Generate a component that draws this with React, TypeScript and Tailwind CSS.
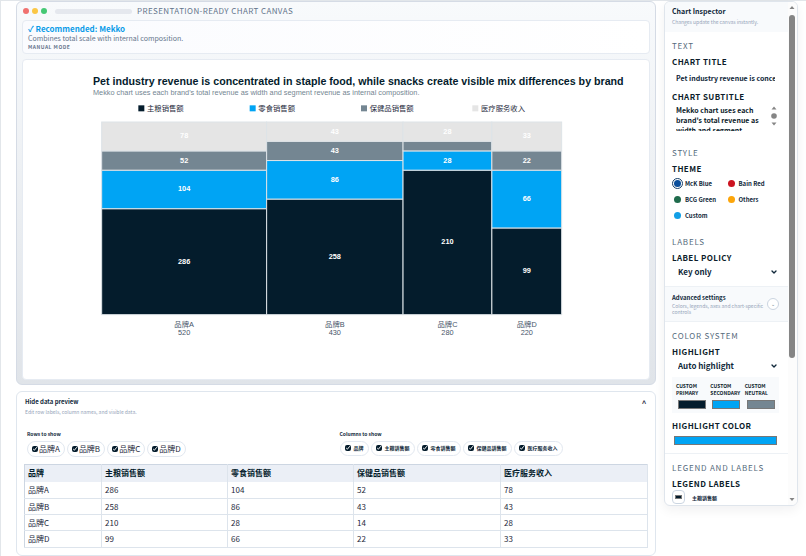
import type { ReactNode } from "react";
import { ChevronDown } from "lucide-react";

const series = [
  { name: "主粮销售额", color: "#041c2c" },
  { name: "零食销售额", color: "#00a4f4" },
  { name: "保健品销售额", color: "#748692" },
  { name: "医疗服务收入", color: "#e5e5e5" },
];

const brands = [
  { name: "品牌A", values: [286, 104, 52, 78] },
  { name: "品牌B", values: [258, 86, 43, 43] },
  { name: "品牌C", values: [210, 28, 14, 28] },
  { name: "品牌D", values: [99, 66, 22, 33] },
];

const themes = [
  { name: "McK Blue", color: "#0b4f9c" },
  { name: "Bain Red", color: "#cc1420" },
  { name: "BCG Green", color: "#1f6b4c" },
  { name: "Others", color: "#fca50a" },
  { name: "Custom", color: "#129fe6" },
];

const columns = ["品牌", ...series.map((s) => s.name)];
const columnWidths = ["w-[77px]", "w-[126px]", "w-[126px]", "w-[147px]", "w-auto"];

function MekkoChart() {
  const left = 118;
  const top = 93;
  const width = 690;
  const height = 289;
  const sum = (values: number[]) => values.reduce((a, b) => a + b, 0);
  const grand = brands.reduce((a, b) => a + sum(b.values), 0);
  let nextX = left;
  return (
    <svg viewBox="0 0 939 478" className="block w-full font-['Liberation_Sans','Noto_Sans_CJK_SC',sans-serif]">
      <text x="105" y="38" fontSize="16" fontWeight="700" fill="#041c2c">
        Pet industry revenue is concentrated in staple food, while snacks create visible mix differences by brand
      </text>
      <text x="105" y="52" fontSize="11" fill="#748692">
        Mekko chart uses each brand's total revenue as width and segment revenue as internal composition.
      </text>
      {series.map((s, i) => (
        <g key={s.name} fontSize="11" fill="#1e293b">
          <rect x={173 + i * 167} y="68" width="9" height="9" fill={s.color} />
          <text x={186 + i * 167} y="77">{s.name}</text>
        </g>
      ))}
      {brands.map((brand) => {
        const total = sum(brand.values);
        const w = (total / grand) * width;
        const x = nextX;
        nextX += w;
        let y = top + height;
        return (
          <g key={brand.name} textAnchor="middle" fontSize="11">
            {brand.values.map((value, i) => {
              const h = (value / total) * height;
              y -= h;
              return (
                <g key={i}>
                  <rect x={x} y={y} width={w} height={h} fill={series[i].color} stroke="#dde3e7" strokeWidth="1.5" />
                  {value > 20 && (
                    <text x={x + w / 2} y={y + h / 2 + 3} fill="#fff" fontWeight="700">
                      {value}
                    </text>
                  )}
                </g>
              );
            })}
            <text x={x + w / 2} y="400" fill="#475569">{brand.name}</text>
            <text x={x + w / 2} y="413" fill="#475569">{total}</text>
          </g>
        );
      })}
    </svg>
  );
}

function SectionTitle({ children }: { children: ReactNode }) {
  return <h3 className="text-[8px] leading-[12px] tracking-widest text-[#566b7d]">{children}</h3>;
}

const labelClass = "block text-[8px] leading-[12px] font-bold tracking-wider text-[#0c1c2a]";

function SelectField({ id, label, value }: { id: string; label: string; value: string }) {
  return (
    <div className="mt-1">
      <label htmlFor={id} className={labelClass}>{label}</label>
      <div className="grid items-center">
        <select id={id} className="col-start-1 row-start-1 h-4 w-full appearance-none bg-transparent px-1.5 text-[8px] font-bold text-[#10283a]">
          <option>{value}</option>
        </select>
        <ChevronDown className="pointer-events-none col-start-1 row-start-1 mr-px size-2 justify-self-end text-[#10283a]" strokeWidth={4} />
      </div>
    </div>
  );
}

function CheckPill({ label, small = false }: { label: string; small?: boolean }) {
  return (
    <label
      className={
        small
          ? "flex h-[15px] items-center gap-[3px] rounded-full border border-[#e2e8f0] px-1 text-[5px] leading-[8px] font-bold whitespace-nowrap text-[#10283a]"
          : "flex h-4 items-center gap-px rounded-full border border-[#e2e8f0] px-1 text-[8px] leading-[12px] whitespace-nowrap"
      }
    >
      <input type="checkbox" defaultChecked className="size-[6px] accent-[#041c2c]" />
      {label}
    </label>
  );
}

function Inspector() {
  return (
    <aside className="flex h-[505px] w-[134px] shrink-0 overflow-hidden rounded-md border border-[#dfe5ec] bg-white shadow-[0_4px_12px_rgba(15,23,42,0.06)]">
      <div className="min-w-0 flex-1 overflow-hidden">
        <header className="h-[30px] bg-[#f8fafc] px-[7px] pt-1">
          <h2 className="text-[7px] leading-[11px] font-bold text-[#10283a]">Chart Inspector</h2>
          <p className="text-[5px] leading-[9px] text-[#94a3b8]">Changes update the canvas instantly.</p>
        </header>

        <section className="pt-2 pr-[9px] pl-[7px]">
          <SectionTitle>TEXT</SectionTitle>
          <label htmlFor="title" className={`mt-1 ${labelClass}`}>CHART TITLE</label>
          <div className="pr-1 pl-1">
            <input
              id="title"
              className="block h-[19px] w-full text-[7px] font-bold text-[#10283a]"
              defaultValue="Pet industry revenue is concentrated in staple food, while snacks create visible mix differences by brand"
            />
          </div>
          <label htmlFor="subtitle" className={`mt-1 ${labelClass}`}>CHART SUBTITLE</label>
          <div className="flex items-start pt-0.5 pr-0.5 pl-1">
            <textarea
              id="subtitle"
              className="h-[26px] min-w-0 flex-1 resize-none overflow-hidden text-[7px] leading-[10px] font-bold text-[#0c1c2a]"
              defaultValue="Mekko chart uses each brand's total revenue as width and segment revenue as internal composition."
            />
            <svg viewBox="0 0 6 24" className="h-6 w-1.5" fill="#858585">
              <path d="M0.5 4.5 3 1.5 5.5 4.5Z" />
              <circle cx="3" cy="11" r="2.8" />
              <path d="M0.5 17.5 3 20.5 5.5 17.5Z" />
            </svg>
          </div>
        </section>

        <section className="pt-4 pr-[9px] pl-[7px]">
          <SectionTitle>STYLE</SectionTitle>
          <fieldset className="mt-1">
            <legend className={labelClass}>THEME</legend>
            <div className="grid grid-cols-2">
              {themes.map((theme, i) => (
                <label key={theme.name} className="flex h-4 items-center gap-0.5 text-[6px] font-bold whitespace-nowrap text-[#10283a]">
                  <span className={i === 0 ? "grid size-[11px] place-items-center rounded-full border border-[#173f68]" : "grid size-[11px] place-items-center"}>
                    <input
                      type="radio"
                      name="theme"
                      defaultChecked={i === 0}
                      className="size-[7px] appearance-none rounded-full"
                      style={{ backgroundColor: theme.color }}
                    />
                  </span>
                  {theme.name}
                </label>
              ))}
            </div>
          </fieldset>
        </section>

        <section className="pt-[13px] pr-[9px] pb-1.5 pl-[7px]">
          <SectionTitle>LABELS</SectionTitle>
          <SelectField id="policy" label="LABEL POLICY" value="Key only" />
        </section>

        <section className="flex h-9 items-center justify-between border-y border-[#edf1f5] bg-[#f8fafc] pr-[9px] pl-[7px]">
          <div>
            <h3 className="text-[6px] leading-[10px] font-bold text-[#10283a]">Advanced settings</h3>
            <p className="text-[5px] leading-[6px] text-[#94a3b8]">Colors, legends, axes and chart-specific controls</p>
          </div>
          <button aria-label="Toggle advanced settings" className="grid size-3 shrink-0 place-items-center rounded-full border border-[#cbd5e1] bg-white text-[5px] text-[#64748b]">
            ⌄
          </button>
        </section>

        <section className="border-b border-[#edf1f5] pt-2 pr-[9px] pb-1 pl-[7px]">
          <SectionTitle>COLOR SYSTEM</SectionTitle>
          <SelectField id="highlight" label="HIGHLIGHT" value="Auto highlight" />
          <div className="mt-[3px] grid h-9 grid-cols-3 bg-[#f8fafc] pt-[5px] pl-1">
            {["PRIMARY", "SECONDARY", "NEUTRAL"].map((name, i) => (
              <label key={name} className="text-[5px] leading-[7px] font-bold text-[#0c1c2a]">
                <span className="block">CUSTOM</span>
                <span className="block">{name}</span>
                <input type="color" defaultValue={series[i].color} className="block h-[17px] w-8" />
              </label>
            ))}
          </div>
          <label htmlFor="accent" className={`mt-[7px] ${labelClass}`}>HIGHLIGHT COLOR</label>
          <input id="accent" type="color" defaultValue="#00a4f4" className="block h-[17px] w-full" />
        </section>

        <section className="pt-2 pr-[9px] pl-[7px]">
          <SectionTitle>LEGEND AND LABELS</SectionTitle>
          <h4 className={`mt-1 ${labelClass}`}>LEGEND LABELS</h4>
          <div className="flex items-center gap-[7px]">
            <input aria-label="主粮销售额 color" type="color" defaultValue="#041c2c" className="h-[14px] w-[13px] rounded-sm border border-[#cbd5e1]" />
            <input aria-label="主粮销售额 label" defaultValue="主粮销售额" className="h-3 min-w-0 flex-1 text-[5px] font-bold text-[#10283a]" />
          </div>
        </section>
      </div>
      <svg viewBox="0 0 9 503" className="w-[9px] shrink-0" fill="#858585">
        <rect width="9" height="503" fill="#fcfcfc" />
        <path d="M1.5 7 4 4 6.5 7Z" />
        <rect x="1" y="13" width="6" height="343" rx="3" />
        <path d="M1.5 496 4 499 6.5 496Z" />
      </svg>
    </aside>
  );
}

export default function App() {
  return (
    <div className="flex min-h-screen items-start gap-2 border-t border-l border-[#e2e6ea] bg-white pr-2 pl-[15px] font-['Noto_Sans_CJK_SC',sans-serif] text-[#1e293b]">
      <main className="min-w-0 flex-1">
        <section className="rounded-md border border-[#d5dbe5] bg-linear-to-b from-[#f8fafc] to-[#e0e4e9] px-[5px] pb-1">
          <header className="flex h-[18px] items-center gap-[3px] pl-px">
            <span className="size-[6px] rounded-full bg-[#f0716f]" />
            <span className="size-[6px] rounded-full bg-[#fbc746]" />
            <span className="size-[6px] rounded-full bg-[#45c874]" />
            <span className="ml-[5px] h-[5px] w-[77px] rounded-full bg-[#e5e8ee]" />
            <h1 className="ml-0.5 text-[8px] leading-[12px] tracking-wider text-[#64748b]">PRESENTATION-READY CHART CANVAS</h1>
          </header>

          <div className="h-[34px] rounded border border-[#e6ebf2] bg-linear-to-r from-[#fafbfe] to-white px-[5px] pt-[3px]">
            <p className="text-[8px] leading-[10px] font-bold text-[#0b9be8]">✓ Recommended: Mekko</p>
            <p className="text-[7px] leading-[9px] text-[#64748b]">Combines total scale with internal composition.</p>
            <p className="text-[5px] leading-[7px] font-bold tracking-widest text-[#64748b]">MANUAL MODE</p>
          </div>

          <div className="mt-[5px] rounded border border-[#e6ebf2] bg-white">
            <MekkoChart />
          </div>
        </section>

        <section className="mt-1.5 rounded-md border border-[#dfe6ee] bg-white px-[7px] pt-[5px] pb-[7px]">
          <header className="flex items-start justify-between px-px">
            <div>
              <h2 className="text-[6px] leading-[10px] font-bold text-[#10283a]">Hide data preview</h2>
              <p className="text-[5px] leading-[9px] text-[#94a3b8]">Edit row labels, column names, and visible data.</p>
            </div>
            <button aria-label="Collapse data preview" className="pr-px text-[7px] leading-[10px] font-bold">˄</button>
          </header>
          <div className="mt-[14px] grid grid-cols-2 gap-1 pl-[3px]">
            <fieldset>
              <legend className="text-[5px] leading-[8px] font-bold text-[#10283a]">Rows to show</legend>
              <div className="mt-[3px] flex gap-0.5">
                {brands.map((b) => <CheckPill key={b.name} label={b.name} />)}
              </div>
            </fieldset>
            <fieldset>
              <legend className="text-[5px] leading-[8px] font-bold text-[#10283a]">Columns to show</legend>
              <div className="mt-[3px] flex gap-0.5">
                {columns.map((c) => <CheckPill key={c} label={c} small />)}
              </div>
            </fieldset>
          </div>
          <table className="mt-[7px] h-[84px] w-full table-fixed border-collapse border border-[#cdd6e2] text-left text-[8px]">
            <thead>
              <tr className="h-[18px] bg-[#ebeff6]">
                {columns.map((c, i) => (
                  <th key={c} className={`border-r border-[#dde4ec] px-[3px] py-0 leading-[12px] font-bold text-[#041c2c] ${columnWidths[i]}`}>{c}</th>
                ))}
              </tr>
            </thead>
            <tbody>
              {brands.map((b) => (
                <tr key={b.name} className="h-4 border-b border-[#dde4ec]">
                  <td className="border-r border-[#dde4ec] px-[3px] py-0 leading-[12px]">{b.name}</td>
                  {b.values.map((v, i) => (
                    <td key={i} className="border-r border-[#dde4ec] px-[3px] py-0 leading-[12px]">{v}</td>
                  ))}
                </tr>
              ))}
            </tbody>
          </table>
        </section>
      </main>
      <Inspector />
    </div>
  );
}
